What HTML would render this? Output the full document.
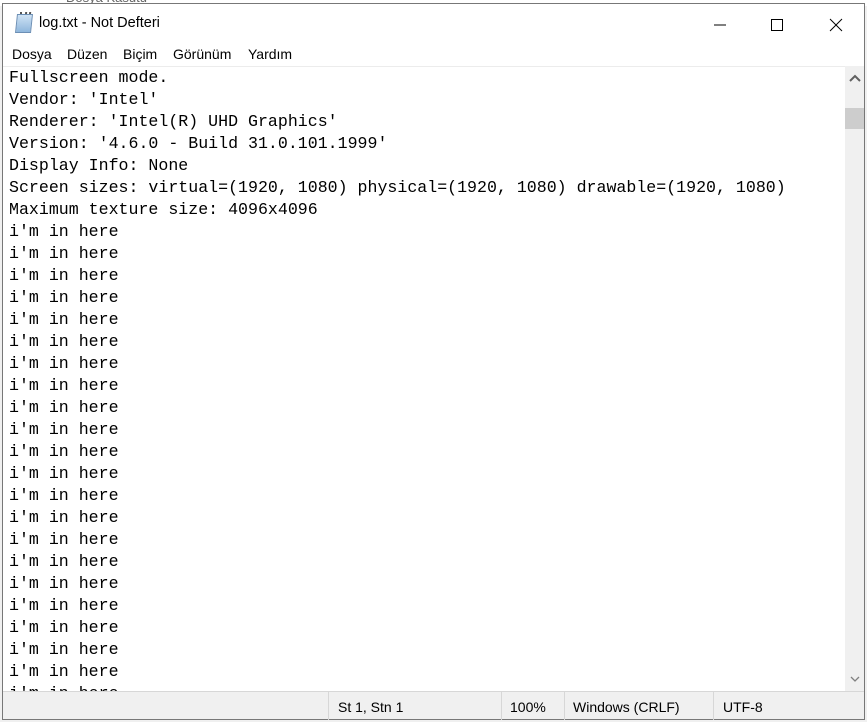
<!DOCTYPE html>
<html><head><meta charset="utf-8"><style>
*{margin:0;padding:0;box-sizing:border-box}
body{width:867px;height:722px;background:#f0f0f0;position:relative;overflow:hidden;font-family:"Liberation Sans",sans-serif}
.bg{position:absolute;left:0;top:0;width:867px;height:6px;background:#fff}
.bgt{position:absolute;left:66px;top:-10px;font-size:13px;color:#666}
.win{position:absolute;left:2px;top:3px;width:863px;height:717px;background:#fff;border:1px solid #777}
.title{position:absolute;left:0;top:0;width:100%;height:38px;background:#fff}
.title .t{position:absolute;left:36px;top:11px;font-size:14.5px;color:#000}
.icon{position:absolute;left:13px;top:10px;width:16px;height:19px;background:linear-gradient(#cfe3f5,#8fb6dc);border:1px solid #6c8fb5;transform:skewX(-6deg)}
.icon:before{content:"";position:absolute;left:2px;top:-3px;width:11px;height:3px;border-top:2px dotted #555}
.menu{position:absolute;left:0;top:38px;height:24px;width:100%;font-size:14px;color:#000}
.menu span{position:absolute;top:4px}
.edit{position:absolute;left:0;top:62px;width:842px;height:625px;background:#fff;border-top:1px solid #ececec;overflow:hidden}
pre{font-family:"Liberation Mono",monospace;font-size:16.6px;line-height:22px;color:#000;padding:0 0 0 6px}
.sb{position:absolute;left:842px;top:62px;width:19px;height:625px;background:#f0f0f0}
.thumb{position:absolute;left:0;top:42px;width:19px;height:21px;background:#cdcdcd}
.status{position:absolute;left:0;top:687px;width:100%;height:28px;background:#f0f0f0;border-top:1px solid #d7d7d7;font-size:14px;color:#000}
.status span{position:absolute;top:7px}
.sep{position:absolute;top:0;width:1px;height:28px;background:#d7d7d7}
</style></head><body>
<div class="bg"><div class="bgt">Dosya Kasutu</div></div>
<div class="win">
<div class="title"><div class="icon"></div><div class="t">log.txt - Not Defteri</div>
<svg style="position:absolute;left:700px;top:10px" width="160" height="20">
<line x1="11" y1="11" x2="23" y2="11" stroke="#000" stroke-width="1"/>
<rect x="68.5" y="5.5" width="11" height="11" fill="none" stroke="#000"/>
<line x1="127" y1="5" x2="139" y2="17" stroke="#000"/><line x1="139" y1="5" x2="127" y2="17" stroke="#000"/>
</svg></div>
<div class="menu"><span style="left:9px">Dosya</span><span style="left:64px">Düzen</span><span style="left:120px">Biçim</span><span style="left:170px">Görünüm</span><span style="left:245px">Yardım</span></div>
<div class="edit"><pre>Fullscreen mode.
Vendor: 'Intel'
Renderer: 'Intel(R) UHD Graphics'
Version: '4.6.0 - Build 31.0.101.1999'
Display Info: None
Screen sizes: virtual=(1920, 1080) physical=(1920, 1080) drawable=(1920, 1080)
Maximum texture size: 4096x4096
i'm in here
i'm in here
i'm in here
i'm in here
i'm in here
i'm in here
i'm in here
i'm in here
i'm in here
i'm in here
i'm in here
i'm in here
i'm in here
i'm in here
i'm in here
i'm in here
i'm in here
i'm in here
i'm in here
i'm in here
i'm in here
i'm in here
i'm in here</pre></div>
<div class="sb"><svg style="position:absolute;left:4px;top:8px" width="12" height="8"><polyline points="1,7 6,2 11,7" fill="none" stroke="#606060" stroke-width="2"/></svg><div class="thumb"></div>
<svg style="position:absolute;left:5px;top:610px" width="10" height="7"><polyline points="1,1 5,5 9,1" fill="none" stroke="#808080" stroke-width="1.3"/></svg></div>
<div class="status">
<div class="sep" style="left:325px"></div><span style="left:335px">St 1, Stn 1</span>
<div class="sep" style="left:498px"></div><span style="left:507px">100%</span>
<div class="sep" style="left:561px"></div><span style="left:570px">Windows (CRLF)</span>
<div class="sep" style="left:710px"></div><span style="left:720px">UTF-8</span>
</div>
</div>
</body></html>
